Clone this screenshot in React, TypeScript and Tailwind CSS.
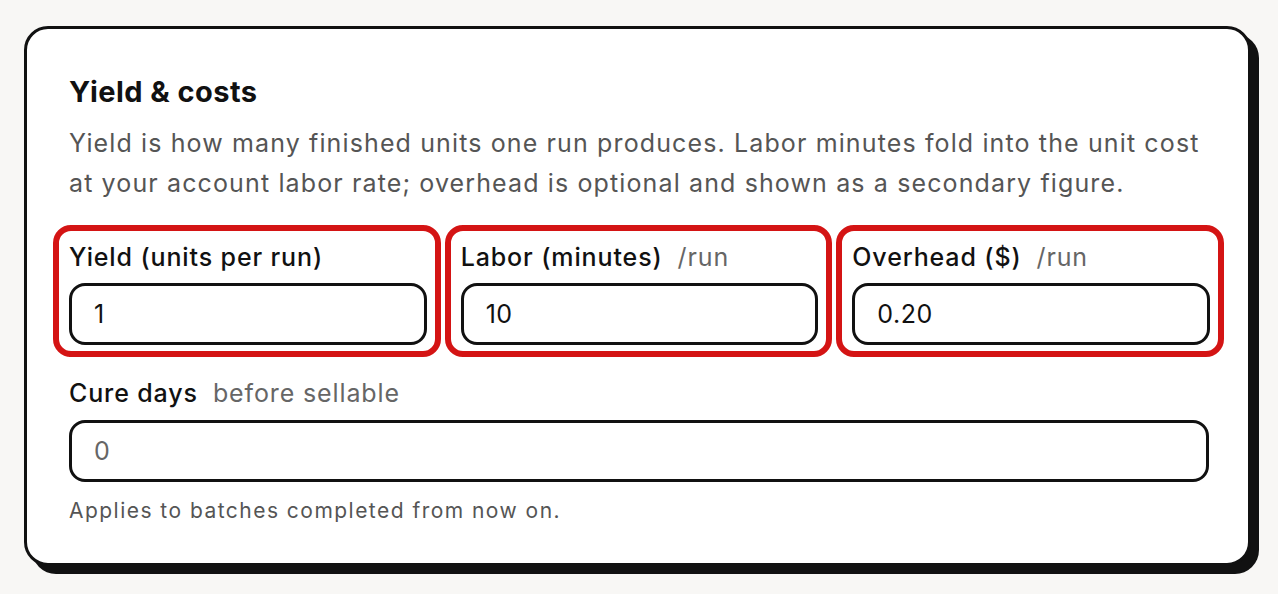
import type { ReactNode } from 'react';

const FONT = "font-['Inter','Liberation_Sans',sans-serif]";

function Field({
  label,
  unit,
  value,
}: {
  label: string;
  unit?: string;
  value: string;
}) {
  return (
    <div className="rounded-[18px] border-[6px] border-[#d41414] pt-[10px] pr-[8px] pb-[6px] pl-[10px]">
      <FieldLabel label={label} unit={unit} />
      <input
        defaultValue={value}
        className="mt-[10px] block h-[62px] w-full rounded-[16px] border-[3px] border-[#111] bg-white pl-[22px] text-[25px] tracking-[0.02em] text-[#111] outline-none"
      />
    </div>
  );
}

function FieldLabel({ label, unit }: { label: string; unit?: ReactNode }) {
  return (
    <div className="flex items-baseline gap-[15px] text-[25px] leading-[32px] tracking-[0.035em]">
      <span className="font-medium text-[#111]">{label}</span>
      {unit && <span className="text-[#666]">{unit}</span>}
    </div>
  );
}

export default function App() {
  return (
    <div className={`min-h-[594px] bg-[#f8f7f5] pt-[26px] pl-[24px] ${FONT}`}>
      <section className="w-[1227px] h-[540px] rounded-[24px] border-[3px] border-[#111] bg-white pt-[45px] pl-[42px] pr-[39px] shadow-[8px_8px_0_#111]">
        <h2 className="text-[29px] font-bold leading-[36px] tracking-[0.015em] text-[#111]">Yield &amp; costs</h2>
        <p className="mt-[13px] text-[25px] leading-[40px] tracking-[0.045em] text-[#555]">
          Yield is how many finished units one run produces. Labor minutes fold into the unit cost
          at your account labor rate; overhead is optional and shown as a secondary figure.
        </p>

        <div className="mt-[22px] -ml-[16px] -mr-[15px] grid grid-cols-3 gap-x-[4px]">
          <Field label="Yield (units per run)" value="1" />
          <Field label="Labor (minutes)" unit="/run" value="10" />
          <Field label="Overhead ($)" unit="/run" value="0.20" />
        </div>

        <div className="mt-[20px]">
          <FieldLabel label="Cure days" unit="before sellable" />
          <input
            placeholder="0"
            className="mt-[11px] block h-[62px] w-full rounded-[16px] border-[3px] border-[#111] bg-white pl-[22px] text-[25px] text-[#111] placeholder:text-[#666] outline-none"
          />
          <p className="mt-[15px] text-[21px] leading-[28px] tracking-[0.07em] text-[#555]">
            Applies to batches completed from now on.
          </p>
        </div>
      </section>
    </div>
  );
}
